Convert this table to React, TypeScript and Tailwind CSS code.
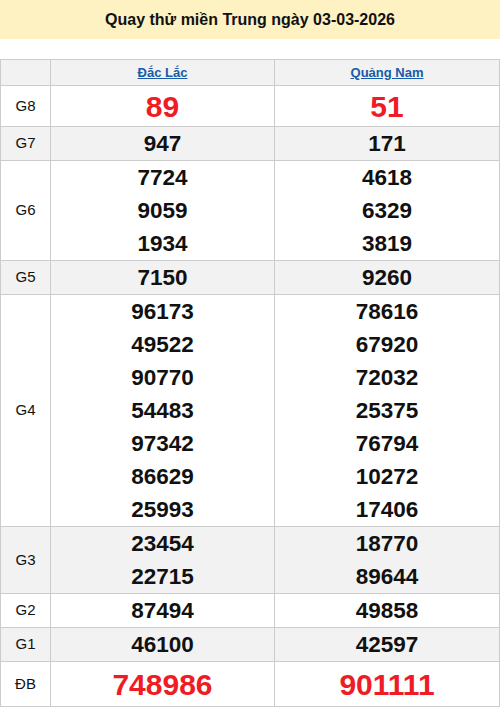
import React from "react";

type Row = { label: string; a: string[]; b: string[]; big?: boolean; h?: string };

const rows: Row[] = [
  { label: "G8", a: ["89"], b: ["51"], big: true, h: "h-[40px]" },
  { label: "G7", a: ["947"], b: ["171"] },
  { label: "G6", a: ["7724", "9059", "1934"], b: ["4618", "6329", "3819"] },
  { label: "G5", a: ["7150"], b: ["9260"] },
  {
    label: "G4",
    a: ["96173", "49522", "90770", "54483", "97342", "86629", "25993"],
    b: ["78616", "67920", "72032", "25375", "76794", "10272", "17406"],
  },
  { label: "G3", a: ["23454", "22715"], b: ["18770", "89644"] },
  { label: "G2", a: ["87494"], b: ["49858"] },
  { label: "G1", a: ["46100"], b: ["42597"] },
  { label: "ĐB", a: ["748986"], b: ["901111"], big: true, h: "h-[44px]" },
];

function Nums({ list, big, h }: { list: string[]; big?: boolean; h?: string }) {
  return (
    <div className="flex flex-col">
      {list.map((n, i) =>
        big ? (
          <div key={i} className={`${h} flex items-center justify-center text-[30px] font-bold text-[#ee1c25]`}>
            {n}
          </div>
        ) : (
          <div key={i} className="h-[33px] flex items-center justify-center text-[22.5px] font-bold text-[#111]">
            {n}
          </div>
        )
      )}
    </div>
  );
}

export default function App() {
  return (
    <div className="w-[500px] h-[712px] bg-white" style={{ fontFamily: '"Liberation Sans", Arial, sans-serif' }}>
      <div className="h-[39px] bg-[#fff2c2] flex items-center justify-center text-[16px] font-bold text-[#111]">
        Quay thử miền Trung ngày 03-03-2026
      </div>
      <div className="h-[20px]" />
      <div className="w-[500px] border-t border-l border-[#ccc]">
        <div className="flex border-b border-[#ccc] bg-[#f2f2f2] h-[26px]">
          <div className="w-[50px] border-r border-[#ccc]" />
          <div className="w-[224px] border-r border-[#ccc] flex items-center justify-center">
            <span className="text-[13px] font-bold text-[#185aa8] underline">Đắc Lắc</span>
          </div>
          <div className="w-[225px] border-r border-[#ccc] flex items-center justify-center">
            <span className="text-[13px] font-bold text-[#185aa8] underline">Quảng Nam</span>
          </div>
        </div>
        {rows.map((r, i) => (
          <div key={r.label} className={`flex border-b border-[#ccc] ${i % 2 === 1 ? "bg-[#f2f2f2]" : "bg-white"}`}>
            <div className="w-[50px] border-r border-[#ccc] flex items-center justify-center text-[15px] text-[#111]">
              {r.label}
            </div>
            <div className="w-[224px] border-r border-[#ccc]">
              <Nums list={r.a} big={r.big} h={r.h} />
            </div>
            <div className="w-[225px] border-r border-[#ccc]">
              <Nums list={r.b} big={r.big} h={r.h} />
            </div>
          </div>
        ))}
      </div>
    </div>
  );
}
